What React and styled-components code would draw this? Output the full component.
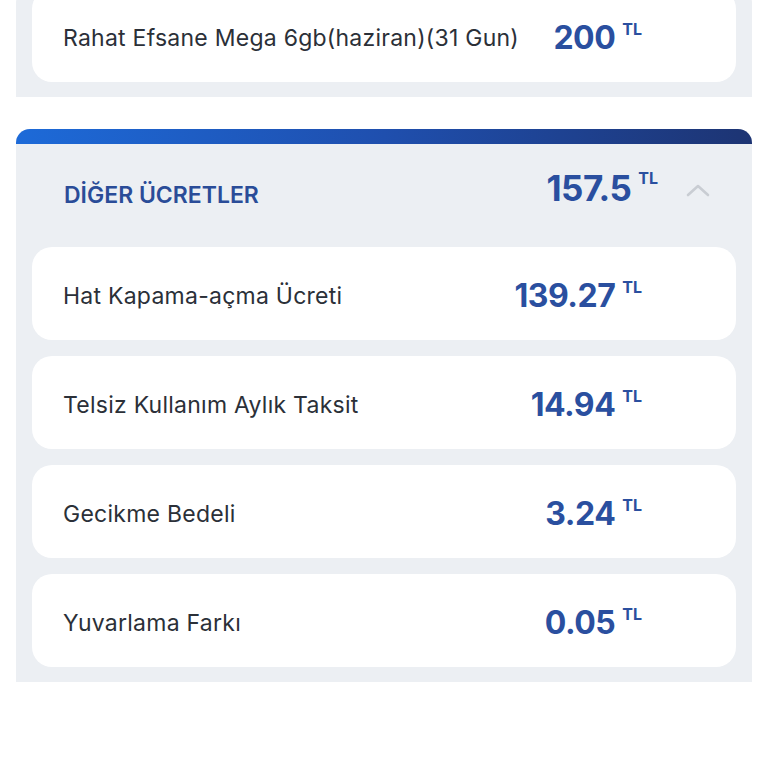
import React from 'react'
import styled, { createGlobalStyle } from 'styled-components'

const GlobalStyle = createGlobalStyle`
    html, body {
        margin: 0;
        padding: 0;
        background: #ffffff;
        font-family: "Inter", "Noto Sans", sans-serif;
    }
`;

const plan = { name: 'Rahat Efsane Mega 6gb(haziran)(31 Gun)', amount: '200' };

const otherFees = [
    { name: 'Hat Kapama-açma Ücreti', amount: '139.27' },
    { name: 'Telsiz Kullanım Aylık Taksit', amount: '14.94' },
    { name: 'Gecikme Bedeli', amount: '3.24' },
    { name: 'Yuvarlama Farkı', amount: '0.05' },
];

const Price = ({ value, large }) => (
    <PriceWrap>
        <Amount $large={large}>{value}</Amount>
        <Currency>TL</Currency>
    </PriceWrap>
)

const ChevronUp = () => (
    <svg width="24" height="14" viewBox="0 0 24 14" fill="none">
        <path d="M2 12 L12 3 L22 12" stroke="#c9cdd3" strokeWidth="2.6" strokeLinecap="round" strokeLinejoin="round" />
    </svg>
)

const FeeCard = ({ name, amount }) => (
    <FeeRow>
        <FeeName>{name}</FeeName>
        <Price value={amount} />
    </FeeRow>
)

const App = () => {
    return (
        <Page>
            <GlobalStyle />
            <Section $scrolled>
                <FeeList>
                    <FeeCard name={plan.name} amount={plan.amount} />
                </FeeList>
            </Section>

            <Section>
                <TopBar />
                <SectionHeader>
                    <SectionTitle>DİĞER ÜCRETLER</SectionTitle>
                    <HeaderRight>
                        <Price value="157.5" large />
                        <ChevronUp />
                    </HeaderRight>
                </SectionHeader>
                <FeeList>
                    {otherFees.map((fee) => (
                        <FeeCard key={fee.name} name={fee.name} amount={fee.amount} />
                    ))}
                </FeeList>
            </Section>
        </Page>
    )
}

export default App

const Page = styled.div`
    width: 768px;
    height: 768px;
    overflow: hidden;
    display: flex;
    flex-direction: column;
    gap: 32px;
    padding: 0 16px;
    box-sizing: border-box;
`;

const Section = styled.div`
    background-color: #eceff3;
    border-radius: 14px 14px 0 0;
    overflow: hidden;
    padding-bottom: 15px;
    margin-top: ${(p) => (p.$scrolled ? '-11px' : '0')};
`;

const TopBar = styled.div`
    height: 15px;
    background: linear-gradient(90deg, #1d6ad8 0%, #1f4fae 50%, #1d3473 100%);
`;

const SectionHeader = styled.div`
    height: 103px;
    display: flex;
    align-items: center;
    justify-content: space-between;
    padding: 0 42px 0 48px;
    box-sizing: border-box;
`;

const SectionTitle = styled.h2`
    margin: 0 0 2px;
    font-size: 23px;
    font-weight: 600;
    color: #2a4c98;
`;

const HeaderRight = styled.div`
    display: flex;
    align-items: center;
    gap: 28px;
    margin-bottom: 12px;
`;

const FeeList = styled.div`
    display: flex;
    flex-direction: column;
    gap: 16px;
    padding: 0 16px;
`;

const FeeRow = styled.div`
    height: 93px;
    background-color: #ffffff;
    border-radius: 20px;
    display: flex;
    align-items: center;
    justify-content: space-between;
    padding: 6px 94px 0 31px;
    box-sizing: border-box;
`;

const FeeName = styled.span`
    font-size: 23px;
    letter-spacing: 0.25px;
    color: #2b3038;
    margin-top: -2px;
`;

const PriceWrap = styled.div`
    display: flex;
    align-items: flex-start;
    gap: 7px;
    color: #2a4f9f;
    margin-top: -2px;
`;

const Amount = styled.span`
    font-size: ${(p) => (p.$large ? '35px' : '32px')};
    font-weight: 700;
    line-height: 1;
    letter-spacing: -0.5px;
`;

const Currency = styled.span`
    font-size: 16px;
    font-weight: 700;
    line-height: 1;
    margin-top: -1px;
`;
